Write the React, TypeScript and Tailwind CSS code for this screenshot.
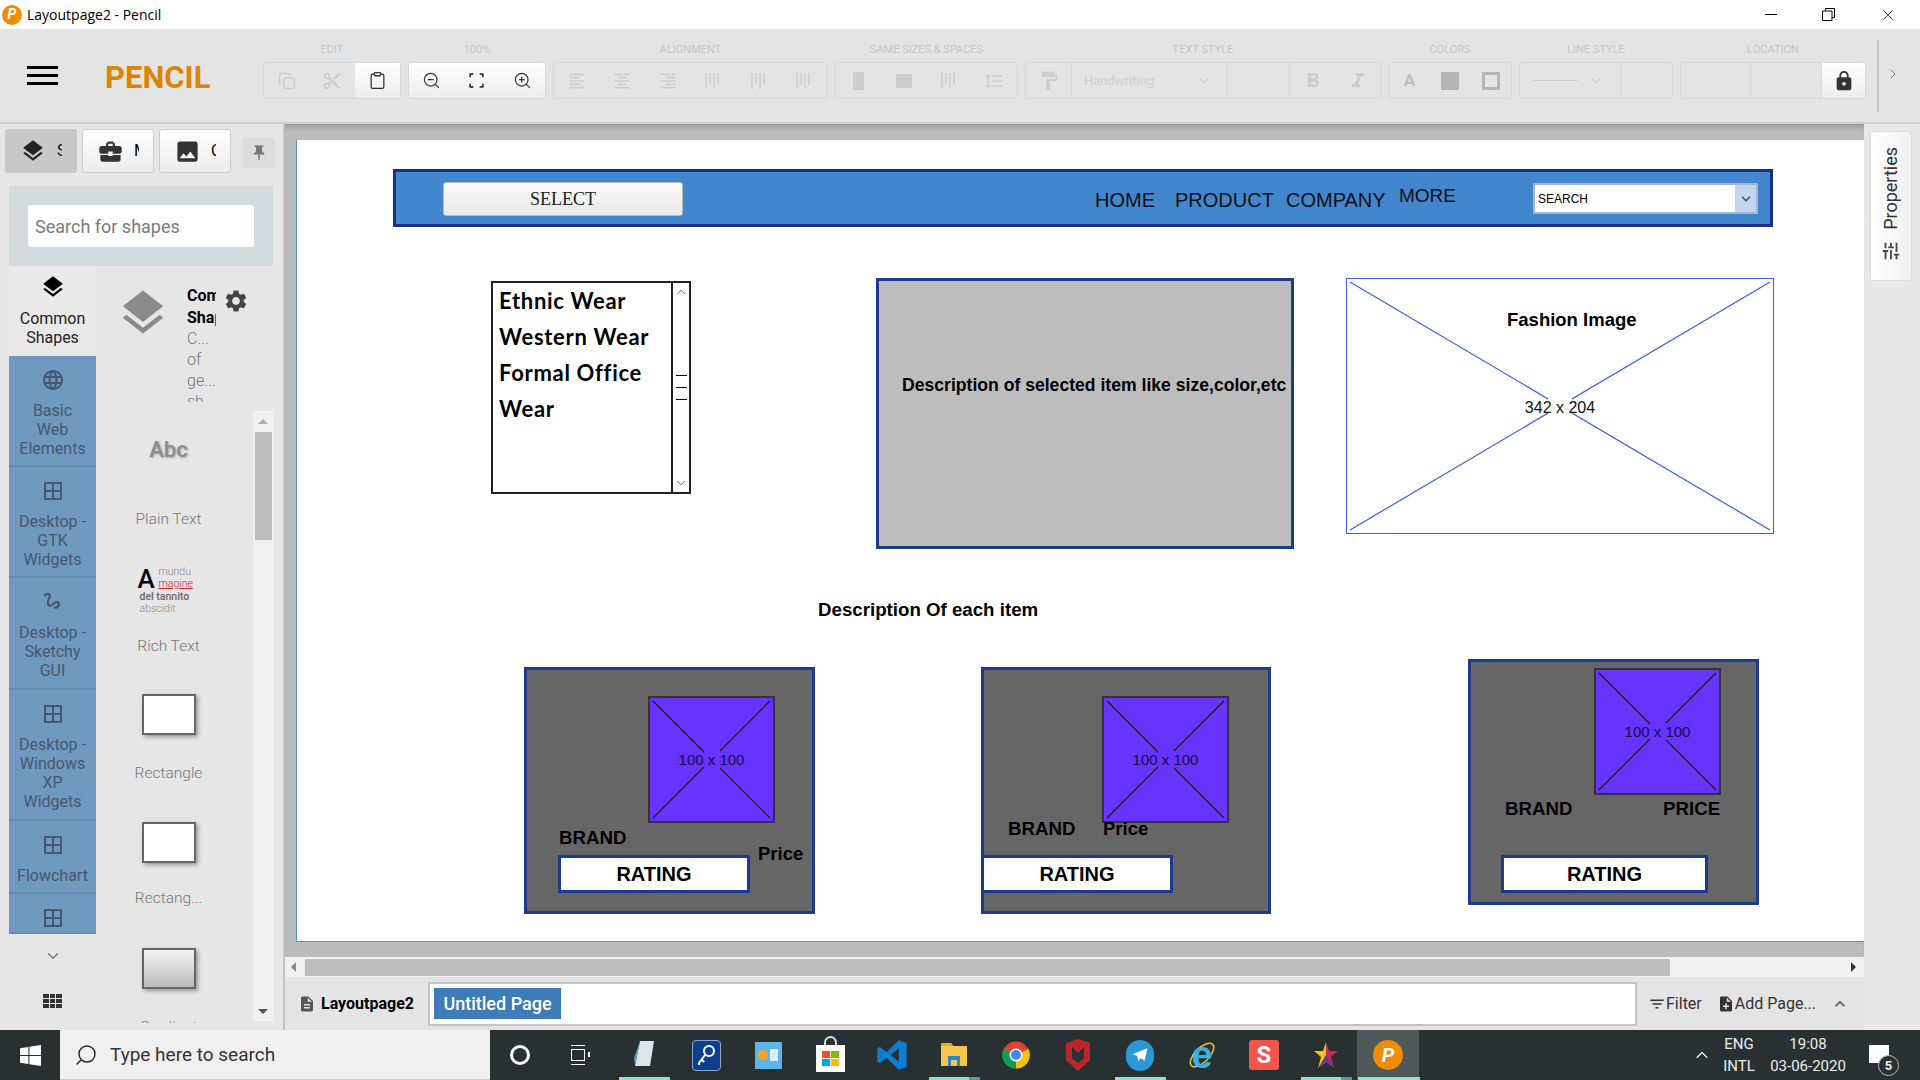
import { ChevronDown, ChevronRight, ChevronUp, Copy, Clipboard, ZoomIn, ZoomOut, Search, X } from "lucide-react";
import {
  MdBorderAll,
  MdBusinessCenter,
  MdContentCut,
  MdDescription,
  MdExpandLess,
  MdFilterList,
  MdFormatAlignCenter,
  MdFormatAlignLeft,
  MdFormatAlignRight,
  MdFormatBold,
  MdFormatItalic,
  MdFormatLineSpacing,
  MdFormatPaint,
  MdImage,
  MdLanguage,
  MdLayers,
  MdLock,
  MdNoteAdd,
  MdPushPin,
  MdSettings,
  MdTune,
} from "react-icons/md";

const sans = "font-['Liberation_Sans',Arial,sans-serif]";
const roboto = "font-['Roboto',sans-serif]";

const GridIcon = () => <MdBorderAll className="w-[24px] h-[24px] text-[#44586e]" />;

const ToolGroup = ({ label, w, children }: { label: string; w: string; children: React.ReactNode }) => (
  <div className={`${w} flex flex-col shrink-0`}>
    <div className={`h-[33px] pt-[14px] text-center text-[11px] leading-[13px] text-[#c6c6c6] whitespace-nowrap ${roboto}`}>{label}</div>
    <div className="h-[37px] flex items-center border border-[#d8d8d8] rounded-[3px] overflow-hidden">{children}</div>
  </div>
);

const Tool = ({ children, active }: { children?: React.ReactNode; active?: boolean }) => (
  <div className={`flex-1 h-full flex items-center justify-center ${active ? "bg-gradient-to-b from-white to-[#ececec]" : ""}`}>{children}</div>
);

const off = "w-[20px] h-[20px] text-[#cdcdcd]";
const on = "w-[19px] h-[19px] text-[#333]";

const BarsIcon = () => (
  <svg viewBox="0 0 18 18" className="w-[18px] h-[18px] text-[#cdcdcd]" stroke="currentColor" strokeWidth="1.6">
    <path d="M2 1v16M6 1v12M10 1v16M14 1v12" />
  </svg>
);

const Category = ({ icon, lines, h }: { icon: React.ReactNode; lines: string[]; h: string }) => (
  <div className={`${h} border-b-2 border-[#668db1] flex flex-col items-center pt-[12px] shrink-0`}>
    <div className="h-[24px] flex items-center">{icon}</div>
    <div className="mt-[9px] text-[16px] leading-[19px] text-center text-[#44586e]">
      {lines.map((l) => (
        <div key={l}>{l}</div>
      ))}
    </div>
  </div>
);

const ShapeRect = ({ gradient }: { gradient?: boolean }) => (
  <div className={`w-[54px] h-[41px] border-[2px] border-[#666] shadow-[2px_2px_4px_rgba(0,0,0,0.35)] ${gradient ? "bg-gradient-to-b from-[#f4f4f4] to-[#bbb]" : "bg-white"}`} />
);

const PlaceholderX = ({ color, w, h }: { color: string; w: number; h: number }) => (
  <svg className="absolute inset-0 w-full h-full" viewBox={`0 0 ${w} ${h}`} preserveAspectRatio="none">
    <path d={`M3 3L${w - 3} ${h - 3}M${w - 3} 3L3 ${h - 3}`} stroke={color} strokeWidth="1.2" fill="none" />
  </svg>
);

const ItemImage = ({ className }: { className: string }) => (
  <div className={`absolute w-[127px] h-[127px] bg-[#6633ff] border-2 border-[#333] ${className}`}>
    <PlaceholderX color="#1a1a1a" w={123} h={123} />
    <div className="absolute inset-0 flex items-center justify-center">
      <div className="w-[16px] h-[18px] bg-[#6633ff]" />
    </div>
    <div className="absolute inset-0 flex items-center justify-center">
      <span className="text-[15px] leading-[20px] text-[#140c4d] whitespace-nowrap">100 x 100</span>
    </div>
  </div>
);

const Rating = ({ className }: { className: string }) => (
  <div className={`absolute h-[38px] bg-white border-[3px] border-[#1c3a8f] flex items-center justify-center text-[20px] font-bold text-black ${className}`}>RATING</div>
);

const Bold18 = ({ className, children }: { className: string; children: React.ReactNode }) => (
  <div className={`absolute leading-[22px] font-bold text-black whitespace-nowrap ${className}`}>{children}</div>
);

const TaskIcon = ({ children, active }: { children: React.ReactNode; active?: boolean }) => (
  <div className={`w-[62px] h-full flex items-center justify-center shrink-0 ${active ? "bg-[#4f5759]" : ""}`}>{children}</div>
);

const App = () => {
  return (
    <div className={`w-[1920px] h-[1080px] overflow-hidden flex flex-col bg-[#e4e4e4] ${roboto}`}>
      {/* title bar */}
      <div className="h-[29px] bg-white flex items-center shrink-0">
        <div className="ml-[2px] w-[20px] h-[20px] rounded-full bg-[#f08c00] flex items-center justify-center text-white text-[14px] font-bold italic">P</div>
        <div className="ml-[5px] text-[14px] text-black font-['Open_Sans',sans-serif]">Layoutpage2 - Pencil</div>
        <div className="ml-auto flex items-center">
          <div className="w-[12px] h-px bg-black mr-[45px]" />
          <svg viewBox="0 0 13 13" className="w-[13px] h-[13px] mr-[44px]" fill="none" stroke="black" strokeWidth="1">
            <path d="M3.500 2.500V.5h9v9h-2M.5 3h9.500v9.500H.5z" />
          </svg>
          <X className="w-[18px] h-[18px] text-black mr-[23px]" strokeWidth={1} />
        </div>
      </div>

      {/* toolbar */}
      <div className="h-[95px] bg-[#e4e4e4] flex shrink-0 border-b-2 border-[#cfcfcf]">
        <div className="w-[263px] flex items-start shrink-0">
          <div className="ml-[27px] mt-[37px] w-[31px] flex flex-col gap-[5px]">
            <div className="h-[3px] bg-black" />
            <div className="h-[3px] bg-black" />
            <div className="h-[3px] bg-black" />
          </div>
          <div className={`ml-[47px] mt-[29px] text-[31px] leading-[40px] font-bold text-[#dd8500] ${roboto}`}>PENCIL</div>
        </div>
        <div className="flex gap-[7px]">
          <ToolGroup label="EDIT" w="w-[138px]">
            <Tool><Copy className="w-[18px] h-[18px] text-[#cdcdcd]" /></Tool>
            <Tool><MdContentCut className={off} /></Tool>
            <Tool active><Clipboard className={on} strokeWidth={1.6} /></Tool>
          </ToolGroup>
          <ToolGroup label="100%" w="w-[138px]">
            <div className="flex w-full h-full bg-gradient-to-b from-white to-[#ececec]">
              <Tool><ZoomOut className={on} strokeWidth={1.5} /></Tool>
              <Tool><svg viewBox="0 0 18 18" className={on} fill="none" stroke="currentColor" strokeWidth="1.6"><path d="M3 6V3h3M12 3h3v3M15 12v3h-3M6 15H3v-3" /></svg></Tool>
              <Tool><ZoomIn className={on} strokeWidth={1.5} /></Tool>
            </div>
          </ToolGroup>
          <ToolGroup label="ALIGNMENT" w="w-[275px]">
            <Tool><MdFormatAlignLeft className={off} /></Tool>
            <Tool><MdFormatAlignCenter className={off} /></Tool>
            <Tool><MdFormatAlignRight className={off} /></Tool>
            <Tool><BarsIcon /></Tool>
            <Tool><BarsIcon /></Tool>
            <Tool><BarsIcon /></Tool>
          </ToolGroup>
          <ToolGroup label="SAME SIZES & SPACES" w="w-[183px]">
            <Tool><div className="w-[11px] h-[18px] bg-[#cdcdcd]" /></Tool>
            <Tool><div className="w-[16px] h-[14px] bg-[#cdcdcd]" /></Tool>
            <Tool><BarsIcon /></Tool>
            <Tool><MdFormatLineSpacing className={off} /></Tool>
          </ToolGroup>
          <ToolGroup label="TEXT STYLE" w="w-[356px]">
            <div className="w-[46px] h-full flex items-center justify-center border-r border-[#d8d8d8]"><MdFormatPaint className="w-[22px] h-[22px] text-[#cdcdcd]" /></div>
            <div className="w-[156px] h-full flex items-center justify-between pl-[12px] pr-[16px] border-r border-[#d8d8d8] text-[13px] text-[#cdcdcd]">
              Handwriting
              <ChevronDown className="w-[14px] h-[14px]" />
            </div>
            <div className="w-[62px] h-full border-r border-[#d8d8d8]" />
            <Tool><MdFormatBold className="w-[24px] h-[24px] text-[#cdcdcd]" /></Tool>
            <Tool><MdFormatItalic className="w-[24px] h-[24px] text-[#cdcdcd]" /></Tool>
          </ToolGroup>
          <ToolGroup label="COLORS" w="w-[124px]">
            <Tool><span className="text-[17px] font-bold text-[#bdbdbd]">A</span></Tool>
            <Tool><div className="w-[18px] h-[18px] bg-[#b5b5b5]" /></Tool>
            <Tool><div className="w-[18px] h-[18px] border-[3px] border-[#b5b5b5]" /></Tool>
          </ToolGroup>
          <ToolGroup label="LINE STYLE" w="w-[154px]">
            <div className="w-[101px] h-full flex items-center justify-between pl-[12px] pr-[17px] border-r border-[#d8d8d8]">
              <div className="w-[46px] h-px bg-[#d2d2d2]" />
              <ChevronDown className="w-[14px] h-[14px] text-[#cdcdcd]" />
            </div>
          </ToolGroup>
          <ToolGroup label="LOCATION" w="w-[186px]">
            <div className="w-[70px] h-full border-r border-[#d8d8d8]" />
            <div className="w-[70px] h-full" />
            <div className="flex-1 h-full flex items-center justify-center bg-gradient-to-b from-white to-[#ececec] border-l border-[#d8d8d8]">
              <MdLock className="w-[22px] h-[22px] text-[#333]" />
            </div>
          </ToolGroup>
        </div>
        <div className="ml-[11px] mt-[11px] w-[2px] h-[72px] bg-[#c4c4c4]" />
        <ChevronRight className="ml-[6px] mt-[37px] w-[16px] h-[16px] text-[#777]" strokeWidth={1.5} />
      </div>

      {/* main */}
      <div className="flex-1 flex min-h-0">
        {/* sidebar */}
        <div className="w-[285px] shrink-0 bg-[#e6e6e6] border-r-2 border-[#c2c2c2] flex flex-col">
          <div className="h-[62px] shrink-0 flex items-start pt-[5px] pl-[5px] gap-[5px]">
            <div className="w-[72px] h-[44px] rounded-[3px] bg-[#c8c8c8] flex items-center pl-[15px] gap-[11px] text-[#111]">
              <MdLayers className="w-[26px] h-[26px] text-[#222]" />
              <span className="w-[5px] overflow-hidden text-[16px]">S</span>
            </div>
            <div className="w-[72px] h-[44px] rounded-[3px] border border-[#ccc] bg-gradient-to-b from-white to-[#ececec] flex items-center pl-[14px] gap-[10px]">
              <MdBusinessCenter className="w-[27px] h-[27px] text-[#333]" />
              <span className="w-[5px] overflow-hidden text-[16px]">M</span>
            </div>
            <div className="w-[72px] h-[44px] rounded-[3px] border border-[#ccc] bg-gradient-to-b from-white to-[#ececec] flex items-center pl-[14px] gap-[10px]">
              <MdImage className="w-[27px] h-[27px] text-[#333]" />
              <span className="w-[5px] overflow-hidden text-[16px]">C</span>
            </div>
            <div className="ml-[7px] mt-[8px] w-[32px] h-[31px] rounded-[3px] bg-[#dcdcdc] flex items-center justify-center">
              <MdPushPin className="w-[18px] h-[18px] text-[#777]" />
            </div>
          </div>
          <div className="ml-[9px] h-[80px] shrink-0 w-[264px] bg-[#d3dadd] flex items-center justify-center">
            <div className="w-[226px] h-[42px] bg-white rounded-[3px] flex items-center pl-[7px] text-[18px] text-[#7b7b7b]">Search for shapes</div>
          </div>
          <div className="flex-1 flex min-h-0 pl-[9px]">
            {/* categories */}
            <div className="w-[87px] shrink-0 flex flex-col">
              <div className="h-[90px] shrink-0 bg-[#e9e9e9] flex flex-col items-center pt-[8px] text-black">
                <MdLayers className="w-[26px] h-[26px]" />
                <div className="mt-[9px] text-[16px] leading-[19px] text-center text-[#222]">
                  Common
                  <br />
                  Shapes
                </div>
              </div>
              <div className="h-[578px] overflow-hidden bg-[#7099bf] flex flex-col shrink-0">
                <Category h="h-[111px]" icon={<MdLanguage className="w-[24px] h-[24px] text-[#44586e]" />} lines={["Basic", "Web", "Elements"]} />
                <Category h="h-[111px]" icon={<GridIcon />} lines={["Desktop -", "GTK", "Widgets"]} />
                <Category
                  h="h-[112px]"
                  icon={
                    <svg viewBox="0 0 24 24" className="w-[22px] h-[22px] text-[#44586e]" fill="none" stroke="currentColor" strokeWidth="2.4" strokeLinecap="round">
                      <path d="M3 5c3-3 7-2 5 2s-3 7 0 9 6-6 9-4 1 7-3 6" />
                    </svg>
                  }
                  lines={["Desktop -", "Sketchy", "GUI"]}
                />
                <Category h="h-[131px]" icon={<GridIcon />} lines={["Desktop -", "Windows", "XP", "Widgets"]} />
                <Category h="h-[73px]" icon={<GridIcon />} lines={["Flowchart"]} />
                <Category h="h-[40px]" icon={<GridIcon />} lines={[]} />
              </div>
              <div className="flex justify-center mt-[13px]">
                <ChevronDown className="w-[18px] h-[18px] text-[#777]" />
              </div>
              <div className="flex justify-center mt-[29px]">
                <div className="w-[19px] grid grid-cols-3 gap-[1px]">
                  {[1, 2, 3, 4, 5, 6, 7, 8, 9].map((n) => (
                    <div key={n} className="h-[4px] bg-[#333]" />
                  ))}
                </div>
              </div>
            </div>
            {/* shapes */}
            <div className="flex-1 flex flex-col min-w-0">
              <div className="h-[136px] shrink-0 flex overflow-hidden">
                <MdLayers className="ml-[20px] mt-[20px] w-[54px] h-[54px] text-[#8a8a8a]" />
                <div className="ml-[17px] w-[29px] overflow-hidden pt-[19px] h-[136px]">
                  <div className="text-[16px] leading-[22px] font-bold text-black whitespace-nowrap">Common</div>
                  <div className="text-[16px] leading-[22px] font-bold text-black whitespace-nowrap">Shapes</div>
                  <div className="-mt-[1px] text-[16px] leading-[21px] font-light text-[#777]">
                    C...
                    <br />
                    of
                    <br />
                    ge...
                    <br />
                    sh
                  </div>
                </div>
                <MdSettings className="ml-[7px] mt-[22px] w-[26px] h-[26px] text-[#444]" />
              </div>
              <div className="flex-1 flex min-h-0 mt-[9px]">
                <div className="w-[145px] h-[612px] shrink-0 overflow-hidden flex flex-col items-center text-[15.5px] font-light text-[#777]">
                  <div className="mt-[24px] h-[30px] text-[22px] leading-[30px] font-medium text-[#8d8d8d] [text-shadow:1px_1px_2px_rgba(0,0,0,0.3)]">Abc</div>
                  <div className="mt-[44px] leading-[20px] shrink-0">Plain Text</div>
                  <div className="mt-[36px] w-[62px] h-[49px] relative shrink-0">
                    <span className="absolute left-[0px] top-[0px] text-[26px] leading-[28px] text-black font-medium">A</span>
                    <span className="absolute left-[21px] top-[0px] text-[10.5px] leading-[13px] text-[#888]">mundu</span>
                    <span className="absolute left-[21px] top-[12px] text-[10.5px] leading-[13px] text-[#c22] underline">magine</span>
                    <span className="absolute left-[2px] top-[25px] text-[10.5px] leading-[13px] font-medium text-[#666]">del tannito</span>
                    <span className="absolute left-[2px] top-[37px] text-[10.5px] leading-[13px] text-[#888]">abscidit</span>
                  </div>
                  <div className="mt-[22px] leading-[20px] shrink-0">Rich Text</div>
                  <div className="mt-[38px] shrink-0"><ShapeRect /></div>
                  <div className="mt-[28px] leading-[20px] shrink-0">Rectangle</div>
                  <div className="mt-[39px] shrink-0"><ShapeRect /></div>
                  <div className="mt-[25px] leading-[20px] shrink-0">Rectang...</div>
                  <div className="mt-[40px] shrink-0"><ShapeRect gradient /></div>
                  <div className="mt-[28px] leading-[20px] shrink-0">Gradient</div>
                </div>
                <div className="ml-[12px] w-[20px] shrink-0 h-[610px] bg-[#f1f1f1] flex flex-col items-center relative">
                  <div className="w-0 h-0 mt-[8px] border-x-[5px] border-x-transparent border-b-[5px] border-b-[#aaa]" />
                  <div className="mt-[8px] w-[17px] h-[108px] bg-[#bdbdbd]" />
                  <div className="absolute bottom-[7px] w-0 h-0 border-x-[5px] border-x-transparent border-t-[5px] border-t-[#555]" />
                </div>
              </div>
            </div>
          </div>
        </div>

        {/* center */}
        <div className="flex-1 flex flex-col min-w-0">
          <div className="h-[833px] shrink-0 bg-[#bcbcbc] pl-[11px] pt-[16px] shadow-[inset_0_6px_6px_-4px_rgba(0,0,0,0.25)]">
            {/* drawing page */}
            <div className={`relative w-[1568px] h-[802px] bg-white border-l border-b border-[#5b8fc4] ${sans}`}>
              {/* nav bar */}
              <div className="absolute left-[96px] top-[29px] w-[1380px] h-[58px] bg-[#4286cd] border-[3px] border-[#1c2f84]" />
              <div className="absolute left-[146px] top-[42px] w-[240px] h-[34px] rounded-[3px] border border-[#bbb] bg-gradient-to-b from-[#fafafa] to-[#e8e8e8] flex items-center justify-center text-[18px] text-[#222] font-['Liberation_Serif',serif]">SELECT</div>
              <div className="absolute left-[798px] top-[48px] text-[20px] leading-[24px] text-[#111]">HOME</div>
              <div className="absolute left-[878px] top-[48px] text-[20px] leading-[24px] text-[#111]">PRODUCT</div>
              <div className="absolute left-[989px] top-[48px] text-[20px] leading-[24px] text-[#111]">COMPANY</div>
              <div className="absolute left-[1102px] top-[44px] text-[19px] leading-[24px] text-[#111]">MORE</div>
              <div className="absolute left-[1236px] top-[43px] w-[225px] h-[31px] bg-white border-2 border-[#a3b8cf] flex items-center pl-[3px] text-[12px] text-black">
                SEARCH
                <div className="absolute right-0 top-0 w-[21px] h-full bg-[#c5d5f0] flex items-center justify-center">
                  <ChevronDown className="w-[14px] h-[14px] text-[#44586e]" strokeWidth={3} />
                </div>
              </div>

              {/* list box */}
              <div className="absolute left-[194px] top-[141px] w-[200px] h-[213px] border-2 border-[#222] bg-white flex">
                <div className="flex-1 pl-[6px] text-[22px] leading-[36px] font-bold text-black font-['Lato',sans-serif] tracking-[0.7px]">
                  Ethnic Wear
                  <br />
                  Western Wear
                  <br />
                  Formal Office
                  <br />
                  Wear
                </div>
                <div className="w-[18px] border-l-2 border-[#222] flex flex-col items-center justify-between py-[2px] relative">
                  <ChevronUp className="w-[14px] h-[14px] text-[#222]" strokeWidth={1.2} />
                  <div className="absolute top-[92px] w-[11px] flex flex-col gap-[11px]">
                    <div className="h-px bg-black" />
                    <div className="h-px bg-black" />
                    <div className="h-px bg-black" />
                  </div>
                  <ChevronDown className="w-[14px] h-[14px] text-[#222]" strokeWidth={1.2} />
                </div>
              </div>

              {/* selected item */}
              <div className="absolute left-[579px] top-[138px] w-[418px] h-[271px] bg-[#bdbdbd] border-[3px] border-[#1c3a8f]" />
              <Bold18 className="left-[605px] top-[234px] text-[17.6px]">Description of selected item like size,color,etc</Bold18>

              {/* fashion image */}
              <div className="absolute left-[1049px] top-[138px] w-[428px] h-[256px] bg-white border border-[#3a62e0]">
                <PlaceholderX color="#3a62e0" w={426} h={254} />
                <div className="absolute inset-0 flex items-center justify-center">
                  <div className="w-[24px] h-[18px] bg-white" />
                </div>
                <div className="absolute inset-0 flex items-center justify-center pt-[3px]">
                  <span className="text-[16px] leading-[20px] text-[#111]">342 x 204</span>
                </div>
              </div>
              <Bold18 className="left-[1210px] top-[169px] text-[18.5px]">Fashion Image</Bold18>

              <Bold18 className="left-[521px] top-[459px] text-[18.7px]">Description Of each item</Bold18>

              {/* card 1 */}
              <div className="absolute left-[227px] top-[527px] w-[291px] h-[247px] bg-[#666] border-[3px] border-[#1c3a8f]" />
              <ItemImage className="left-[351px] top-[556px]" />
              <Bold18 className="left-[262px] top-[687px] text-[18.7px]">BRAND</Bold18>
              <Bold18 className="left-[461px] top-[703px] text-[18.5px]">Price</Bold18>
              <Rating className="left-[261px] top-[715px] w-[192px]" />

              {/* card 2 */}
              <div className="absolute left-[684px] top-[527px] w-[290px] h-[247px] bg-[#666] border-[3px] border-[#1c3a8f]" />
              <ItemImage className="left-[805px] top-[556px]" />
              <Bold18 className="left-[711px] top-[678px] text-[18.7px]">BRAND</Bold18>
              <Bold18 className="left-[806px] top-[678px] text-[18.5px]">Price</Bold18>
              <Rating className="left-[684px] top-[715px] w-[192px]" />

              {/* card 3 */}
              <div className="absolute left-[1171px] top-[519px] w-[291px] h-[246px] bg-[#666] border-[3px] border-[#1c3a8f]" />
              <ItemImage className="left-[1297px] top-[528px]" />
              <Bold18 className="left-[1208px] top-[658px] text-[18.7px]">BRAND</Bold18>
              <Bold18 className="left-[1366px] top-[658px] text-[18.7px]">PRICE</Bold18>
              <Rating className="left-[1204px] top-[715px] w-[207px]" />
            </div>
          </div>
          {/* horizontal scrollbar */}
          <div className="h-[20px] shrink-0 bg-[#f1f1f1] flex items-center relative">
            <div className="ml-[6px] w-0 h-0 border-y-[5px] border-y-transparent border-r-[5px] border-r-[#888]" />
            <div className="ml-[9px] w-[1365px] h-[17px] bg-[#bdbdbd]" />
            <div className="absolute right-[8px] w-0 h-0 border-y-[5px] border-y-transparent border-l-[5px] border-l-[#333]" />
          </div>
          {/* pages bar */}
          <div className="flex-1 flex items-center bg-[#e4e4e4] text-[16px]">
            <MdDescription className="ml-[13px] w-[18px] h-[18px] text-[#555] shrink-0" />
            <div className="ml-[5px] w-[107px] font-bold text-black">Layoutpage2</div>
            <div className="w-[1209px] h-[44px] bg-white border-2 border-[#c4c4c4] flex items-center pl-[4px]">
              <div className="h-[31px] w-[127px] bg-[#3d7cb8] text-white text-[18px] font-medium flex items-center justify-center">Untitled Page</div>
            </div>
            <MdFilterList className="ml-[11px] w-[18px] h-[18px] text-[#333]" />
            <div className="text-[#333]">Filter</div>
            <MdNoteAdd className="ml-[15px] w-[18px] h-[18px] text-[#333]" />
            <div className="text-[#333]">Add Page...</div>
            <MdExpandLess className="ml-[14px] w-[20px] h-[20px] text-[#555]" />
          </div>
        </div>

        {/* properties */}
        <div className="w-[56px] shrink-0 bg-[#e8e8e8] pl-[6px] pt-[7px]">
          <div className="w-[42px] h-[150px] rounded-[3px] bg-gradient-to-r from-[#ffffff] to-[#f0f0f0] border border-[#ddd] flex flex-col items-center justify-end pb-[18px]">
            <div className="[writing-mode:vertical-rl] rotate-180 text-[18px] leading-[22px] text-[#333] mb-[10px]">Properties</div>
            <MdTune className="w-[22px] h-[22px] text-[#444] rotate-90" />
          </div>
        </div>
      </div>

      {/* taskbar */}
      <div className="h-[50px] shrink-0 bg-[#283032] flex items-center relative text-white">
        <div className="w-[60px] h-full flex items-center justify-center">
          <svg viewBox="0 0 20 20" className="w-[21px] h-[21px]" fill="white">
            <path d="M0 3l8-1.2V9.5H0zM9 1.600 20 0v9.500H9zM0 10.500h8v7.700L0 17zM9 10.500h11V20L9 18.400z" />
          </svg>
        </div>
        <div className="w-[430px] h-full bg-[#f0f0f0] flex items-center border-b border-[#ccc] text-[#333]">
          <Search className="ml-[14px] w-[24px] h-[24px] -scale-x-100 text-[#222]" strokeWidth={1.4} />
          <div className={`ml-[12px] mt-[2px] text-[19px] ${roboto}`}>Type here to search</div>
        </div>
        <div className="ml-[20px] w-[20px] h-[20px] rounded-full border-[3px] border-white" />
        <div className="ml-[41px] w-[20px] h-[20px] flex flex-col justify-between">
          <div className="h-px w-[14px] bg-white" />
          <div className="h-[12px] w-[14px] border border-white relative">
            <div className="absolute -right-[6px] top-[2px] w-[2px] h-[5px] bg-white" />
          </div>
          <div className="h-px w-[14px] bg-white" />
        </div>
        <div className="ml-[22px] h-full flex">
          <TaskIcon>
            <svg viewBox="0 0 24 30" className="w-[24px] h-[30px]"><path d="M8 1h14l-4 25H3z" fill="#d9e6ea" /><path d="M8 1 3 26l-1-8z" fill="#58a6b4" /></svg>
          </TaskIcon>
          <TaskIcon>
            <div className="w-[29px] h-[31px] rounded-[4px] bg-[#0d3f8f] border border-[#8ea4c8] flex items-center justify-center">
              <svg viewBox="0 0 24 24" className="w-[24px] h-[24px]" fill="none" stroke="white" strokeWidth="2"><circle cx="15" cy="8" r="5" /><path d="M11 12 5 20v2M8 17l2 2" /></svg>
            </div>
          </TaskIcon>
          <TaskIcon>
            <div className="w-[27px] h-[27px] bg-[#5fb4e8] flex items-center justify-center gap-[2px]">
              <div className="w-[10px] h-[10px] rounded-full bg-[#f5a623]" />
              <div className="w-[8px] h-[12px] bg-[#d8eefb]" />
            </div>
          </TaskIcon>
          <TaskIcon>
            <div className="relative mt-[6px]">
              <div className="absolute left-[8px] -top-[9px] w-[13px] h-[14px] rounded-t-full border-2 border-[#ddd]" />
              <div className="relative w-[29px] h-[27px] bg-white grid grid-cols-2 gap-[1px] p-[6px]">
                <div className="bg-[#f25022]" />
                <div className="bg-[#7fba00]" />
                <div className="bg-[#00a4ef]" />
                <div className="bg-[#ffb900]" />
              </div>
            </div>
          </TaskIcon>
          <TaskIcon>
            <svg viewBox="0 0 24 24" className="w-[32px] h-[32px]"><path d="M17 1 8 10 3 6 1 7v10l2 1 5-4 9 9 6-2V3z" fill="#0a7fd0" /><path d="M17 7v10l-6-5z" fill="#283032" /></svg>
          </TaskIcon>
          <TaskIcon>
            <svg viewBox="0 0 28 30" className="w-[28px] h-[30px]"><path d="M1 3h10l2 3h14v20H1z" fill="#f5c84c" /><path d="M1 3h10l2 3H1z" fill="#e8a33a" /><path d="M8 16h12v10h-3v-6h-6v6H8z" fill="#2a86c8" /></svg>
          </TaskIcon>
          <TaskIcon>
            <svg viewBox="0 0 28 28" className="w-[28px] h-[28px]">
              <circle cx="14" cy="14" r="13.500" fill="#db4437" />
              <path d="M14 14 26.500 8A13.500 13.500 0 0 1 14 27.500z" fill="#f4c20d" />
              <path d="M14 14 14 27.500A13.500 13.500 0 0 1 1.500 8z" fill="#0f9d58" />
              <circle cx="14" cy="14" r="6.500" fill="#fff" />
              <circle cx="14" cy="14" r="5" fill="#4285f4" />
            </svg>
          </TaskIcon>
          <TaskIcon>
            <svg viewBox="0 0 26 32" className="w-[26px] h-[32px]"><path d="M1 4 13 0l12 4v17l-12 11L1 21z" fill="#b8272c" /><path d="M7 8v11l6 5 6-5V8l-6 6z" fill="#283032" /></svg>
          </TaskIcon>
          <TaskIcon>
            <div className="w-[28px] h-[31px] rounded-full bg-[#2a9ad6] flex items-center justify-center">
              <svg viewBox="0 0 24 24" className="w-[18px] h-[18px]" fill="white"><path d="M22 3 2 11l6 2 2 7 3-4 5 4z" /></svg>
            </div>
          </TaskIcon>
          <TaskIcon>
            <div className="relative w-[30px] h-[32px] flex items-center justify-center">
              <svg viewBox="0 0 30 32" className="absolute inset-0 w-full h-full" fill="none">
                <ellipse cx="15" cy="16" rx="15" ry="7" transform="rotate(-45 15 16)" stroke="#e8c020" strokeWidth="1.6" />
              </svg>
              <span className="relative text-[38px] leading-[34px] font-['Liberation_Sans',sans-serif] font-bold text-[#35b4e8]">e</span>
            </div>
          </TaskIcon>
          <TaskIcon>
            <div className="w-[30px] h-[30px] rounded-[3px] bg-[#f4544a] flex items-center justify-center text-white text-[24px] font-bold">S</div>
          </TaskIcon>
          <TaskIcon>
            <svg viewBox="0 0 24 28" className="w-[24px] h-[28px]">
              <path d="M12 1l3 9h9l-7 6 3 11-8-6z" fill="#c22a52" />
              <path d="M12 1 9 10H0l7 6-3 11 8-6z" fill="#f3c11b" />
              <path d="M12 14l8 13-8-6-8 6z" fill="#5b3b98" />
            </svg>
          </TaskIcon>
          <TaskIcon active>
            <div className="w-[30px] h-[30px] rounded-full bg-[#f08c00] flex items-center justify-center text-white text-[20px] font-bold italic">P</div>
          </TaskIcon>
        </div>
        {/* running indicators */}
        <div className="absolute left-[619px] bottom-0 w-[51px] h-[3px] bg-[#8fe0d4]" />
        <div className="absolute left-[929px] bottom-0 w-[40px] h-[3px] bg-[#8fe0d4]" />
        <div className="absolute left-[969px] bottom-0 w-[11px] h-[3px] bg-[#5f9a93]" />
        <div className="absolute left-[1115px] bottom-0 w-[51px] h-[3px] bg-[#8fe0d4]" />
        <div className="absolute left-[1301px] bottom-0 w-[40px] h-[3px] bg-[#8fe0d4]" />
        <div className="absolute left-[1341px] bottom-0 w-[11px] h-[3px] bg-[#5f9a93]" />
        <div className="absolute left-[1358px] bottom-0 w-[62px] h-[3px] bg-[#8fe0d4]" />
        {/* tray */}
        <div className="ml-auto flex items-center h-full text-[15px] text-[#eee]">
          <ChevronUp className="w-[20px] h-[20px] text-white mr-[10px]" strokeWidth={1.3} />
          <div className="w-[34px] text-center leading-[22px]">
            ENG
            <br />
            INTL
          </div>
          <div className="ml-[13px] w-[78px] text-center leading-[22px]">
            19:08
            <br />
            03-06-2020
          </div>
          <div className="ml-[22px] mr-[31px] w-[20px] h-[18px] bg-white relative mb-[2px]">
            <div className="absolute left-[9px] top-[10px] w-[21px] h-[21px] rounded-full border border-[#bbb] bg-[#283032] flex items-center justify-center text-[13px] font-bold">5</div>
          </div>
        </div>
      </div>
    </div>
  );
};

export default App;
